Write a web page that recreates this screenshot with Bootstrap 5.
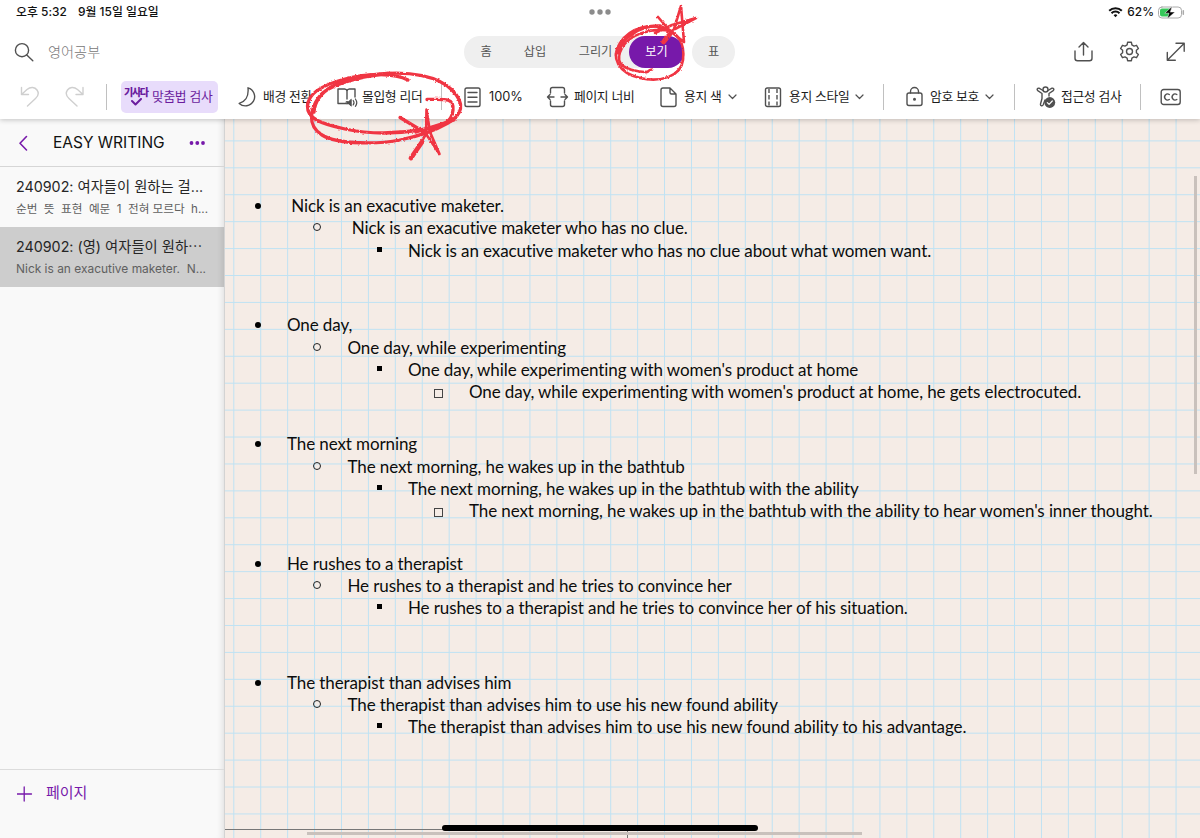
<!DOCTYPE html>
<html lang="ko">
<head>
    <meta charset="UTF-8">
    <title>EASY WRITING</title>
    <link href="https://cdn.jsdelivr.net/npm/bootstrap@5.3.3/dist/css/bootstrap.min.css" rel="stylesheet">
    <style>
        body { font-family: Inter, "Noto Sans CJK KR", sans-serif; color: #1c1c1c; background: #fff; }
        svg { fill: none; stroke: #505050; stroke-width: 1.4; stroke-linecap: round; stroke-linejoin: round; display: block; flex: none; }
        .app { width: 1200px; height: 838px; }
        .app-head { height: 119px; z-index: 2; box-shadow: 0 1px 5px rgba(0, 0, 0, .22); }
        .status { height: 24px; font-size: 11.9px; font-weight: 500; color: #111; padding: 0 15px 0 16px; }
        .dots { margin-left: 432px; }
        .titlebar { height: 56px; display: grid; grid-template-columns: 48px 416px 220px 8px 43px 338px 46px 46px 35px; }
        .pill { background: #efefef; border-radius: 16px; height: 32px; font-size: 12.2px; color: #555; }
        .pill-tabs { display: grid; grid-template-columns: 44px 54px 67px 55px; }
        .tab-on { background: #7719aa; color: #fff; border-radius: 16px; height: 32px; }
        .tools { height: 33px; font-size: 12.8px; letter-spacing: -.35px; display: grid; white-space: nowrap;
            grid-template-columns: 20px 44px 42px 15px 116px 99px 105px 22px 83px 113px 105px 119px 22px 109px 22px 104px 20px 40px; }
        .tools .tool { display: flex; align-items: center; }
        .chev { margin-left: 6px; stroke-width: 1.2; }
        .rule { width: 1px; height: 26px; background: #c0c0c0; }
        .spell { width: 97px; height: 32px; background: #e8dcfb; border-radius: 5px; color: #6b1d9e; }
        .spell-logo { width: 28px; margin-left: 3px; font-size: 10px; font-weight: 900; letter-spacing: -1.3px; line-height: 11px; }
        .side { width: 225px; background: #f9f9f9; border-right: 1px solid #d3d3d3; box-shadow: inset -7px 0 7px -6px rgba(0, 0, 0, .12); }
        .side-head { height: 48px; border-bottom: 1px solid #d6d6d6; }
        .side-name { font-size: 15.5px; color: #111; width: 136px; }
        .entry { height: 60px; padding: 8px 0 0 16px; white-space: nowrap; }
        .entry-on { background: rgba(0, 0, 0, .175); }
        .entry-title { font-size: 14.3px; line-height: 23px; color: #262626; }
        .entry-text { font-size: 11.6px; line-height: 22px; color: #606060; white-space: pre; }
        .entry-on .entry-text { font-size: 11.95px; }
        .side-foot { height: 69px; border-top: 1px solid #dcdcdc; color: #7719aa; font-size: 15px; padding: 12px 0 0 17px; }
        .sheet {
            background-color: #f5ece6;
            background-image: linear-gradient(90deg, #bfe2f3 1.4px, transparent 1.4px), linear-gradient(#bfe2f3 1.4px, transparent 1.4px);
            background-size: 26.93px 26.93px;
            background-position: 8.3px 0, 0 21.4px;
            padding-top: 76.1px;
            font-family: Lato, "Liberation Sans", sans-serif;
            font-size: 17px; letter-spacing: -.1px; font-variant-ligatures: none; color: #0c0c0c;
        }
        .para { height: 119.2px; }
        .ln { height: 22.3px; line-height: 22.3px; display: flex; white-space: pre; }
        .ln i { flex: none; position: relative; }
        .ln i::before { content: ""; position: absolute; top: 8px; left: 0; }
        .l1 { padding-left: 30px; } .l1 i { width: 32px; } .l1 i::before { width: 6px; height: 6px; border-radius: 50%; background: #000; }
        .l2 { padding-left: 88px; } .l2 i { width: 34.5px; } .l2 i::before { top: 6px; width: 8px; height: 8px; border-radius: 50%; border: 1px solid #222; }
        .l3 { padding-left: 152px; } .l3 i { width: 31px; } .l3 i::before { width: 5px; height: 5px; top: 7px; background: #000; }
        .l4 { padding-left: 209px; } .l4 i { width: 35px; } .l4 i::before { width: 9px; height: 9px; top: 8px; border: 1px solid #444; }
        .vbar { right: 3px; top: 57px; width: 3px; height: 298px; background: #c9c1bc; }
        .hline { left: 0; bottom: 8px; width: 403px; height: 1px; background: #777; }
        .tick { left: 402px; bottom: 0; width: 1px; height: 8px; background: #777; }
        .hbar { left: 82px; bottom: 3px; width: 555px; height: 3px; background: #c9c1bc; }
        .home-bar { left: 217px; bottom: 7px; width: 316px; height: 6px; border-radius: 3px; background: #000; }
        .ink { left: 0; top: 0; z-index: 5; pointer-events: none; }
        .ink path { stroke: #f03543; stroke-width: 3.3; }
        .ink .thin { stroke-width: 2.6; }
        .ink .thick { stroke-width: 4.8; }
    </style>
</head>
<body>
<div class="app position-relative d-flex flex-column overflow-hidden">
    <header class="app-head bg-white position-relative">
        <div class="status d-flex align-items-center">
            <span style="width: 62px">오후 5:32</span>
            <span style="width: 79px" class="text-nowrap">9월 15일 일요일</span>
            <svg class="dots me-auto" width="22" height="6"><g fill="#8c8c8c" stroke="none"><circle cx="3" cy="3" r="2.7"/><circle cx="11" cy="3" r="2.7"/><circle cx="19" cy="3" r="2.7"/></g></svg>
            <svg width="15" height="12" viewBox="0 0 15 12" style="stroke: #111; stroke-width: 2; stroke-linecap: butt"><path d="M1.2 4.8a9 9 0 0 1 12.6 0M3.5 7.3a5.6 5.6 0 0 1 8 0"/><path d="M7.5 11.2L5.6 9.2a2.8 2.8 0 0 1 3.8 0z" fill="#111" stroke="none"/></svg>
            <span style="margin: 0 3px 0 4px">62%</span>
            <svg width="28" height="13" viewBox="0 0 28 13"><rect x="1.500" y="1" width="23" height="11" rx="3.4" stroke="#aaa" stroke-width="1"/><path d="M5 2.500H13v8H5a2 2 0 0 1-2-2v-4a2 2 0 0 1 2-2z" fill="#35c759" stroke="none"/><path d="M26.300 4.800v3.400" stroke="#aaa" stroke-width="1.500"/><path d="M15 .5L7.800 7.200h4.200l-1.700 5.500L18 6h-4.500z" fill="#000" stroke="#fff" stroke-width=".5"/></svg>
        </div>
        <div class="titlebar align-items-center">
            <svg width="48" height="24" viewBox="0 0 48 24"><circle cx="22" cy="10.2" r="6.6"/><path d="M26.800 15l6 5.800"/></svg>
            <span style="font-size: 14.2px; color: #777; font-weight: 300">영어공부</span>
            <div class="pill pill-tabs align-items-center text-center">
                <span>홈</span><span>삽입</span><span>그리기</span><span class="tab-on d-flex align-items-center justify-content-center">보기</span>
            </div>
            <span></span>
            <div class="pill d-flex align-items-center justify-content-center">표</div>
            <span></span>
            <svg width="22" height="24" viewBox="0 0 22 24"><path d="M2 11v7.300a2.500 2.500 0 0 0 2.500 2.500h12a2.500 2.500 0 0 0 2.500-2.500V11M10.500 15V3M6 7l4.500-4.500L15 7"/></svg>
            <svg width="22" height="22" viewBox="-10.500 -10.500 22 22"><path d="M-2.400-6.600L-1.900-9.200H1.900L2.400-6.600 4.500-5.400 7-6.200 8.900-3 6.900-1.200V1.200L8.900 3 7 6.200 4.500 5.400 2.400 6.600 1.900 9.200H-1.900L-2.400 6.600-4.500 5.400-7 6.200-8.900 3-6.900 1.200V-1.200L-8.900-3-7-6.200-4.500-5.400z"/><circle r="3"/></svg>
            <svg width="22" height="22" viewBox="0 0 22 22"><path d="M2.500 19L19 2.500M11 2.300h8.200v8M2.300 11.500v7.700h8"/></svg>
        </div>
        <div class="tools align-items-center">
            <span></span>
            <svg width="20" height="24" viewBox="0 0 20 24" style="stroke: #cfcfcf"><path d="M1.500 2.500v7h7M1.500 9.500L7 4.500c3.500-3 8-2.500 10 .5s1.200 6.200-1.500 8.500L7.500 21"/></svg>
            <svg width="20" height="24" viewBox="0 0 20 24" style="stroke: #cfcfcf"><path d="M19 2.500v7h-7M19 9.500l-5.500-5C10 1.500 5.500 2 3.500 5s-1.200 6.200 1.500 8.500L13 21"/></svg>
            <span class="rule"></span>
            <div class="tool"><div class="spell d-flex align-items-center">
                <span class="spell-logo">기사다<svg width="27" height="9" viewBox="0 0 27 9" style="stroke: #6b1d9e; stroke-width: 2"><path d="M8 3l3.500 3.500L17 1"/></svg></span>
                <span>맞춤법 검사</span>
            </div></div>
            <div class="tool"><svg width="26" height="24" viewBox="0 0 26 24"><path d="M11 2.800A9.200 9.200 0 1 1 2.200 18.400C8 16.500 12 13 11 2.800z"/></svg>배경 전환</div>
            <div class="tool"><svg width="26" height="24" viewBox="0 0 26 24"><path d="M10 18.500H2V4h6.500a2.500 2.500 0 0 1 2.500 2v8M11 6a2.500 2.500 0 0 1 2.500-2H19v8"/><path d="M10.500 16.500h2.200l2.600-2.300v7l-2.600-2.300h-2.200z" fill="#505050" stroke-width=".8"/><path d="M17.200 15.500c1 1.300 1 3 0 4.400M19.400 14c1.700 2.300 1.700 5 0 7.300" stroke-width="1.200"/></svg>몰입형 리더</div>
            <span class="rule"></span>
            <div class="tool"><svg width="26" height="24" viewBox="0 0 26 24"><rect x="2" y="3" width="15" height="18.500" rx="1.800"/><path d="M5 7.500h9M5 12.200h9M5 17h9"/></svg><span style="letter-spacing: 0">100%</span></div>
            <div class="tool"><svg width="28" height="24" viewBox="0 0 28 24"><path d="M4.500 8V4.500a2 2 0 0 1 2-2h10a2 2 0 0 1 2 2V8M4.500 16v3.500a2 2 0 0 0 2 2h10a2 2 0 0 0 2-2V16M8 12H1.500M4 9.500L1.500 12 4 14.500M15 12h6.500M19 9.500l2.500 2.500-2.500 2.500"/></svg>페이지 너비</div>
            <div class="tool"><svg width="25" height="24" viewBox="0 0 25 24"><path d="M11 3H4a2 2 0 0 0-2 2v14.500a2 2 0 0 0 2 2h11a2 2 0 0 0 2-2V9zM11 3v4.500A1.500 1.500 0 0 0 12.500 9H17"/></svg>용지 색<svg class="chev" width="9" height="6" viewBox="0 0 9 6"><path d="M1 1l3.500 3.500L8 1"/></svg></div>
            <div class="tool"><svg width="25" height="24" viewBox="0 0 25 24"><rect x="1.500" y="3" width="15" height="18.500" rx="1.800"/><path d="M5 4v4M5 10v4.500M5 16.500v4M13 4v4M13 10v4.500M13 16.500v4" stroke-linecap="butt"/></svg>용지 스타일<svg class="chev" width="9" height="6" viewBox="0 0 9 6"><path d="M1 1l3.500 3.500L8 1"/></svg></div>
            <span class="rule"></span>
            <div class="tool"><svg width="25" height="24" viewBox="0 0 25 24"><rect x="2" y="8" width="15" height="12.500" rx="2"/><path d="M5.500 8V6.500a4 4 0 0 1 8 0V8"/><circle cx="9.500" cy="14.200" r=".8" fill="#505050"/></svg>암호 보호<svg class="chev" width="9" height="6" viewBox="0 0 9 6"><path d="M1 1l3.500 3.500L8 1"/></svg></div>
            <span class="rule"></span>
            <div class="tool"><svg width="25" height="24" viewBox="0 0 25 24"><circle cx="9.500" cy="4.500" r="2.500"/><path d="M7 5.500L3 3.200C1.500 2.800.5 4.500 1.800 5.600L6 8.500v5L4.500 19c-.3 2 2 2.500 2.700.8L9 15M12 5.500l4-2.300c1.500-.4 2.500 1.300 1.200 2.400L13 8.500V11"/><circle cx="13.800" cy="17.500" r="5.400" fill="#505050" stroke="none"/><path d="M11.300 17.600l1.800 1.700 3.200-3.300" stroke="#fff" stroke-width="1.200"/></svg>접근성 검사</div>
            <span class="rule"></span>
            <svg width="22" height="18" viewBox="0 0 22 18"><rect x="1.200" y="1.500" width="19" height="15" rx="2.500"/><path d="M9.300 6.500a3 3 0 1 0 0 5M16.800 6.500a3 3 0 1 0 0 5"/></svg>
        </div>
    </header>
    <div class="d-flex flex-grow-1">
        <aside class="side d-flex flex-column flex-shrink-0">
            <div class="side-head d-flex align-items-center">
                <svg width="53" height="20" viewBox="0 0 53 20" style="stroke: #7719aa; stroke-width: 1.600"><path d="M26.500 3.500L20 10.300l6.500 6.700"/></svg>
                <span class="side-name">EASY WRITING</span>
                <svg width="18" height="6"><g fill="#7719aa" stroke="none"><circle cx="2.500" cy="3" r="1.900"/><circle cx="8.300" cy="3" r="1.900"/><circle cx="14" cy="3" r="1.900"/></g></svg>
            </div>
            <div class="entry">
                <div class="entry-title">240902: 여자들이 원하는 걸...</div>
                <div class="entry-text">순번  뜻  표현  예문  1  전혀 모르다  h...</div>
            </div>
            <div class="entry entry-on">
                <div class="entry-title">240902: (영) 여자들이 원하⋯</div>
                <div class="entry-text">Nick is an exacutive maketer.  N...</div>
            </div>
            <div class="side-foot mt-auto d-flex align-items-start">
                <svg class="mt-1" width="29" height="16" viewBox="0 0 29 16" style="stroke: #7719aa; stroke-width: 1.300"><path d="M0 8h14.500M7.200 1v14"/></svg>페이지
            </div>
        </aside>
        <main class="sheet flex-grow-1 position-relative">
            <div class="para">
                <div class="ln l1"><i></i> Nick is an exacutive maketer.</div>
                <div class="ln l2"><i></i> Nick is an exacutive maketer who has no clue.</div>
                <div class="ln l3"><i></i>Nick is an exacutive maketer who has no clue about what women want.</div>
            </div>
            <div class="para">
                <div class="ln l1"><i></i>One day,</div>
                <div class="ln l2"><i></i>One day, while experimenting</div>
                <div class="ln l3"><i></i>One day, while experimenting with women's product at home</div>
                <div class="ln l4"><i></i>One day, while experimenting with women's product at home, he gets electrocuted.</div>
            </div>
            <div class="para">
                <div class="ln l1"><i></i>The next morning</div>
                <div class="ln l2"><i></i>The next morning, he wakes up in the bathtub</div>
                <div class="ln l3"><i></i>The next morning, he wakes up in the bathtub with the ability</div>
                <div class="ln l4"><i></i>The next morning, he wakes up in the bathtub with the ability to hear women's inner thought.</div>
            </div>
            <div class="para">
                <div class="ln l1"><i></i>He rushes to a therapist</div>
                <div class="ln l2"><i></i>He rushes to a therapist and he tries to convince her</div>
                <div class="ln l3"><i></i>He rushes to a therapist and he tries to convince her of his situation.</div>
            </div>
            <div class="para">
                <div class="ln l1"><i></i>The therapist than advises him</div>
                <div class="ln l2"><i></i>The therapist than advises him to use his new found ability</div>
                <div class="ln l3"><i></i>The therapist than advises him to use his new found ability to his advantage.</div>
            </div>
            <div class="vbar position-absolute"></div>
            <div class="hline position-absolute"></div>
            <div class="tick position-absolute"></div>
            <div class="hbar position-absolute"></div>
            <div class="home-bar position-absolute"></div>
        </main>
    </div>
    <!-- red pencil marks -->
    <svg class="ink position-absolute" width="1200" height="170">
        <filter id="rough" x="-5%" y="-5%" width="110%" height="110%" color-interpolation-filters="sRGB"><feTurbulence type="fractalNoise" baseFrequency=".5" numOctaves="2"/><feDisplacementMap in="SourceGraphic" scale="2.500" xChannelSelector="R" yChannelSelector="G"/></filter>
        <g filter="url(#rough)">
            <path d="M408 80C395 73 368 73 345 79S308 93 307.500 106 322 124 345 129 395 134 420 130 452 122 453 110 446 99 427 99.500"/>
            <path d="M314 112C316 86 350 77 380 74S438 76 452 90 462 115 448 123 420 136 400 140 338 145 322 135 311 108 319 97 350 78 390 73"/>
            <path d="M400 117.500L424 132"/>
            <path class="thin" d="M426.500 109.500L430 132 439.500 154 424 131M426.500 109.500L426 134 413 156"/>
            <path class="thick" d="M411 158L422 142"/>
            <path d="M416 132L454 120"/>
            <path class="thin" d="M668 31C652 21 630 28 620 43S619 73 640 78 681 76 683 60 680 33 660 26"/>
            <path d="M660 26C640 25 621 38 618 53"/>
            <path class="thin" d="M672 31C650 27 629 35 622 48S620 68 637 71 645 70 652 69.500"/>
            <path class="thin" d="M658 17L670 31 684 42 681 6 674 29 663 42M696 18L672 25 655 33M696 18L675 29"/>
            <path class="thick" d="M663.500 42L670 34"/>
        </g>
    </svg>
</div>
<script src="https://cdn.jsdelivr.net/npm/bootstrap@5.3.3/dist/js/bootstrap.bundle.min.js"></script>
</body>
</html>
